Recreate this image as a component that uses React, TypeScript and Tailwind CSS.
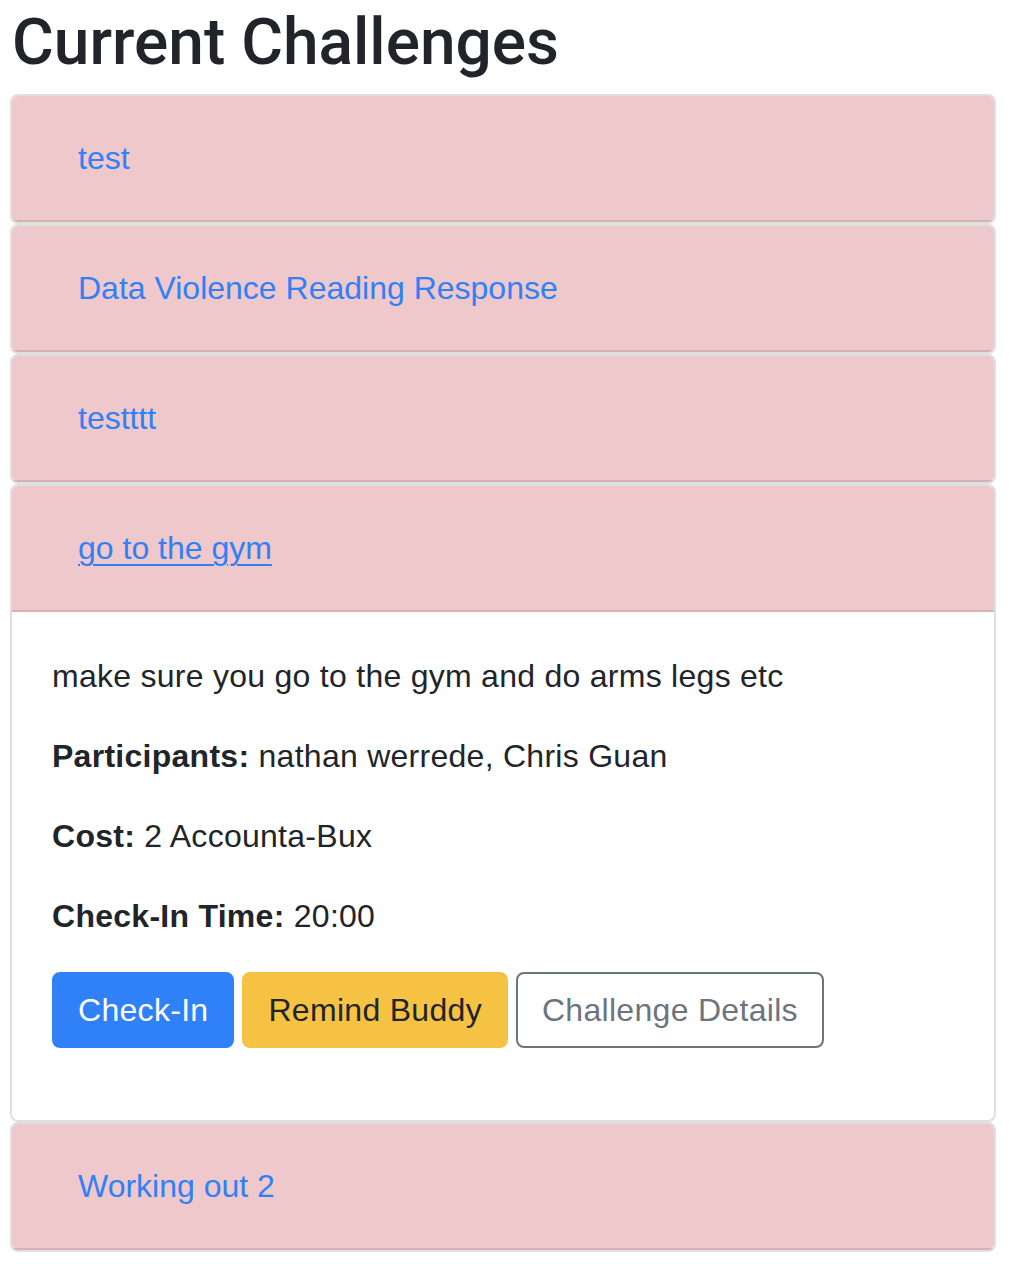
import { useState } from 'react';

interface Challenge {
  id: number;
  title: string;
  description?: string;
  participants?: string;
  cost?: string;
  checkInTime?: string;
}

const challenges: Challenge[] = [
  { id: 1, title: 'test' },
  { id: 2, title: 'Data Violence Reading Response' },
  { id: 3, title: 'testttt' },
  {
    id: 4,
    title: 'go to the gym',
    description: 'make sure you go to the gym and do arms legs etc',
    participants: 'nathan werrede, Chris Guan',
    cost: '2 Accounta-Bux',
    checkInTime: '20:00',
  },
  { id: 5, title: 'Working out 2' },
];

function ChallengeCard({
  challenge,
  open,
  onToggle,
}: {
  challenge: Challenge;
  open: boolean;
  onToggle: () => void;
}) {
  return (
    <div className="flex flex-col rounded-[8px] border-2 border-[#dfdfdf] bg-white overflow-hidden">
      <div className="bg-[#efc8cc] border-b-2 border-[#d5b0b4] px-[40px] py-[24px]">
        <h2 className="m-0">
          <button
            onClick={onToggle}
            className={
              open
                ? 'px-[24px] py-[12px] border-2 border-transparent text-[32px] leading-[48px] text-[#3080f7] underline decoration-2 underline-offset-[5px] cursor-pointer'
                : 'px-[24px] py-[12px] border-2 border-transparent text-[32px] leading-[48px] text-[#3080f7] cursor-pointer'
            }
          >
            {challenge.title}
          </button>
        </h2>
      </div>
      {open && (
        <div className="px-[40px] pt-[40px] pb-[40px] text-[32px] leading-[48px] text-[#212529]">
          <div className="tracking-[0.27px]">
            <p className="mb-[32px]">{challenge.description}</p>
            <p className="mb-[32px]">
              <b className="font-bold">Participants:</b> {challenge.participants}
            </p>
            <p className="mb-[32px]">
              <b className="font-bold">Cost:</b> {challenge.cost}
            </p>
            <p className="mb-[32px]">
              <b className="font-bold">Check-In Time:</b> {challenge.checkInTime}
            </p>
          </div>
          <div className="flex gap-[8px] mb-[32px] tracking-[0.3px]">
            <button className="px-[24px] py-[12px] border-2 border-[#3080f7] bg-[#3080f7] text-white rounded-[8px] leading-[48px]">
              Check-In
            </button>
            <button className="px-[24px] py-[12px] border-2 border-[#f6c243] bg-[#f6c243] text-[#212529] rounded-[8px] leading-[48px]">
              Remind Buddy
            </button>
            <button className="px-[24px] py-[12px] border-2 border-[#6c757d] bg-white text-[#6c757d] rounded-[8px] leading-[48px]">
              Challenge Details
            </button>
          </div>
        </div>
      )}
    </div>
  );
}

export default function App() {
  const [openId, setOpenId] = useState<number | null>(4);

  return (
    <div className="min-h-screen bg-white pl-[10px] pr-[18px] font-['Liberation_Sans',Arial,sans-serif]">
      <h1 className="pt-[4px] mb-[13px] pl-[2px] text-[64px] leading-[77px] text-[#212529] font-medium font-['Roboto','Liberation_Sans',sans-serif]">
        Current Challenges
      </h1>
      <div className="flex flex-col">
        {challenges.map(c => (
          <ChallengeCard
            key={c.id}
            challenge={c}
            open={openId === c.id}
            onToggle={() => setOpenId(openId === c.id ? null : c.id)}
          />
        ))}
      </div>
    </div>
  );
}
